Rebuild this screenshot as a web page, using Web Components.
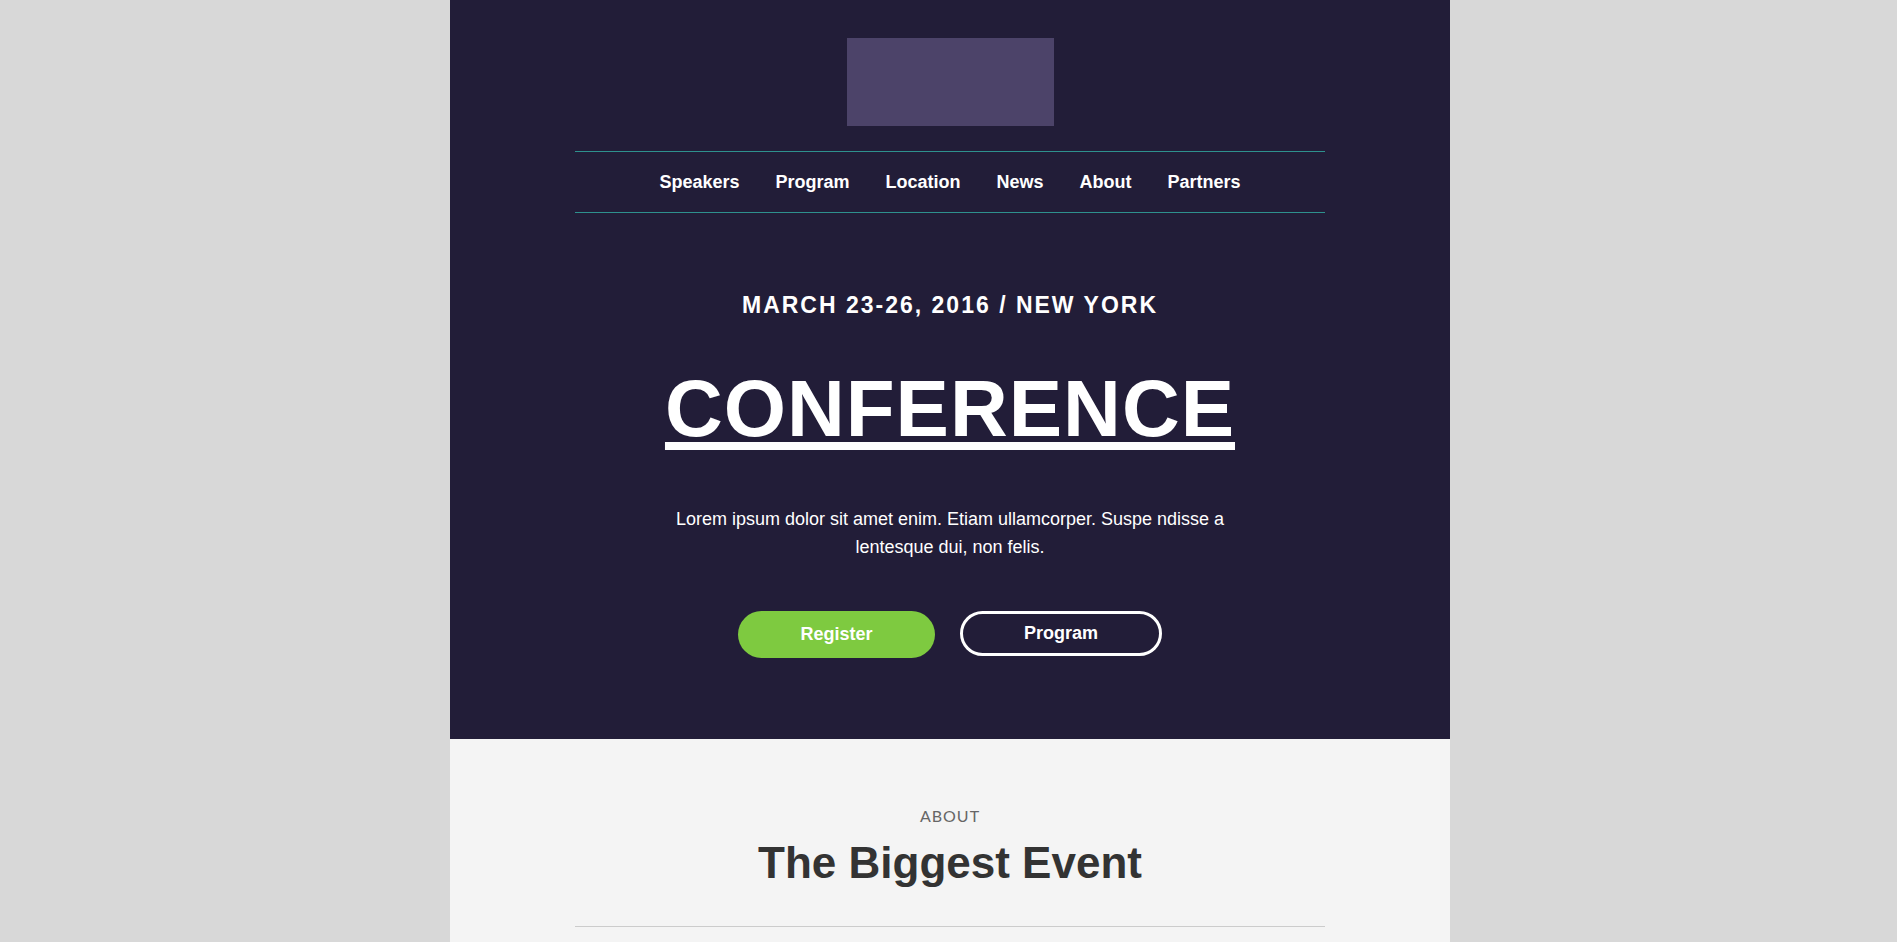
<!DOCTYPE html>
<html lang="en">
<head>
<meta charset="utf-8">
<meta name="viewport" content="width=device-width, initial-scale=1">
<title>Conference</title>
<style>
html { background: #d8d8d8; }
body { margin: 0; padding-left: 3px; font-family: "Liberation Sans", Arial, sans-serif; font-size: 18px; }
</style>
</head>
<body>
<conf-page>
  <conf-hero>
    <conf-nav slot="nav">
      <conf-link href="#speakers">Speakers</conf-link>
      <conf-link href="#program">Program</conf-link>
      <conf-link href="#location">Location</conf-link>
      <conf-link href="#news">News</conf-link>
      <conf-link href="#about">About</conf-link>
      <conf-link href="#partners">Partners</conf-link>
    </conf-nav>
    <span slot="date">MARCH 23-26, 2016 / NEW YORK</span>
    <span slot="title">CONFERENCE</span>
    <span slot="lead">Lorem ipsum dolor sit amet enim. Etiam ullamcorper. Suspe ndisse a lentesque dui, non felis.</span>
    <conf-button slot="actions" href="#register">Register</conf-button>
    <conf-button slot="actions" href="#program" outline>Program</conf-button>
  </conf-hero>
  <conf-section id="about">
    <span slot="kicker">ABOUT</span>
    <span slot="heading">The Biggest Event</span>
  </conf-section>
</conf-page>
<script>
const define = (name, html) => {
  const template = document.createElement('template');
  template.innerHTML = html;
  customElements.define(name, class extends HTMLElement {
    constructor() {
      super();
      this.attachShadow({ mode: 'open' }).append(template.content.cloneNode(true));
    }
    connectedCallback() {
      const link = this.shadowRoot.querySelector('a');
      if (link) link.href = this.getAttribute('href');
    }
  });
};

define('conf-page', `
<style>
:host { display: flex; flex-direction: column; max-width: 1000px; min-height: 100vh; margin: 0 auto; background: #f4f4f4; }
</style>
<slot></slot>`);

define('conf-link', `
<style>
:host { display: block; }
a { color: inherit; text-decoration: none; font-weight: 700; }
</style>
<a><slot></slot></a>`);

define('conf-nav', `
<style>
:host { display: block; }
nav { display: flex; flex-wrap: wrap; justify-content: center; gap: 0 36px; padding: 16px 0; line-height: 28px; border: solid #2e918e; border-width: 1px 0; }
</style>
<nav aria-label="Main"><slot></slot></nav>`);

define('conf-button', `
<style>
:host { display: block; }
a { display: block; box-sizing: border-box; min-width: 197px; padding: 12px 20px; line-height: 23px; border-radius: 24px; background: #7eca40; color: #fff; font-weight: 700; text-align: center; text-decoration: none; }
:host([outline]) a { min-width: 202px; padding: 8px 20px; border: 3px solid #fff; background: none; }
</style>
<a><slot></slot></a>`);

define('conf-hero', `
<style>
:host { display: block; background: #221d38; color: #fff; text-align: center; }
.inner { max-width: 750px; margin: 0 auto; padding: 38px 0 81px; }
.logo { width: 207px; height: 88px; margin: 0 auto 25px; background: #4c4369; }
.date { margin: 78px 0 0; font-size: 23px; line-height: 28px; font-weight: 700; letter-spacing: 2px; }
h1 { margin: 44px 0 0; font-size: 80px; line-height: 92px; letter-spacing: 1px; text-decoration: underline 8px; text-underline-offset: 6px; }
.lead { max-width: 550px; margin: 50px auto 0; line-height: 28px; }
.actions { display: flex; flex-wrap: wrap; justify-content: center; align-items: flex-start; gap: 25px; margin-top: 50px; }
</style>
<div class="inner">
  <div class="logo"></div>
  <slot name="nav"></slot>
  <p class="date"><slot name="date"></slot></p>
  <h1><slot name="title"></slot></h1>
  <p class="lead"><slot name="lead"></slot></p>
  <div class="actions"><slot name="actions"></slot></div>
</div>`);

define('conf-section', `
<style>
:host { display: block; color: #333; text-align: center; }
.inner { max-width: 750px; margin: 0 auto; padding-top: 65px; }
.kicker { margin: 0; color: #666; font-family: Lato, sans-serif; font-size: 16px; line-height: 24px; letter-spacing: 1px; }
h2 { margin: 9px 0 0; padding-bottom: 37px; font-size: 44px; line-height: 52px; border-bottom: 1px solid #ccc; }
</style>
<div class="inner">
  <p class="kicker"><slot name="kicker"></slot></p>
  <h2><slot name="heading"></slot></h2>
</div>`);
</script>
</body>
</html>
